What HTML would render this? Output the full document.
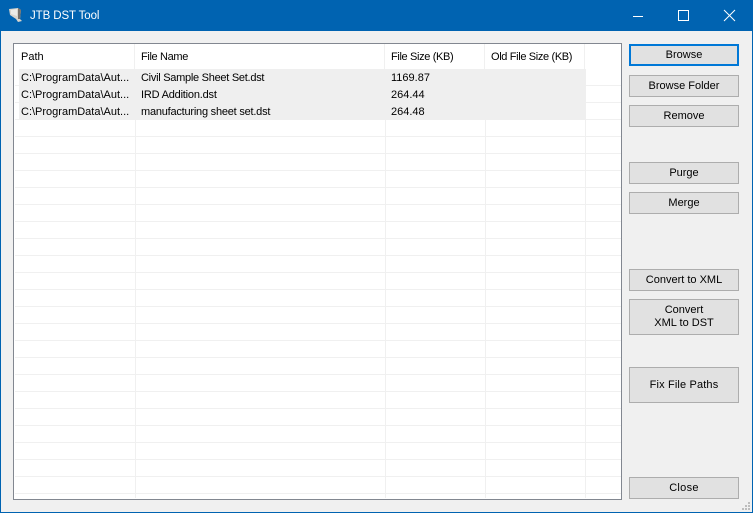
<!DOCTYPE html>
<html><head><meta charset="utf-8"><style>
html,body{margin:0;padding:0;width:753px;height:513px;overflow:hidden;background:#f0f0f0;font-family:"Liberation Sans",sans-serif;font-size:11px;color:#000}
div{position:absolute;box-sizing:border-box}
.t{white-space:nowrap;line-height:14px}
.hd{letter-spacing:-.35px}
.h{background:#efefef}
.g{background:#f0f0f0}
.b{left:629px;width:110px;background:#e1e1e1;border:1px solid #adadad;display:flex;align-items:center;justify-content:center;text-align:center;line-height:13px}
</style></head><body>
<div style="left:0;top:0;width:753px;height:31px;background:#0063b1"></div>
<div style="left:0;top:31px;width:1px;height:482px;background:#0063b1"></div>
<div style="right:0;top:31px;width:1px;height:482px;background:#0063b1"></div>
<div style="left:0;top:512px;width:753px;height:1px;background:#0063b1"></div>
<svg style="position:absolute;left:8px;top:7px" width="16" height="16"><path d="M1 2L10 1L13 3L12 12L14 14L10 15L8 12L2 8Z" fill="#d8d4cc"/><path d="M10 1L13 3L12 12L10 12Z" fill="#77716a"/><path d="M3 3L9 2L9 9L3 7Z" fill="#ecebe6"/></svg>
<div class="t" style="left:30px;top:9px;color:#fff;font-size:11.5px;letter-spacing:-.1px">JTB DST Tool</div>
<svg style="position:absolute;left:630px;top:8px" width="112" height="16" fill="none" stroke="#fff" stroke-width="1"><path d="M3 8.5H13"/><rect x="48.5" y="2.5" width="10" height="10"/><path d="M94 2L105 13M105 2L94 13"/></svg>

<div style="left:13px;top:43px;width:609px;height:457px;background:#fff;border:1px solid #828790"></div>
<!-- grid -->
<div class="g" style="left:15px;top:85px;width:606px;height:1px"></div>
<div class="g" style="left:15px;top:102px;width:606px;height:1px"></div>
<div class="g" style="left:15px;top:119px;width:606px;height:1px"></div>
<div class="g" style="left:15px;top:136px;width:606px;height:1px"></div>
<div class="g" style="left:15px;top:153px;width:606px;height:1px"></div>
<div class="g" style="left:15px;top:170px;width:606px;height:1px"></div>
<div class="g" style="left:15px;top:187px;width:606px;height:1px"></div>
<div class="g" style="left:15px;top:204px;width:606px;height:1px"></div>
<div class="g" style="left:15px;top:221px;width:606px;height:1px"></div>
<div class="g" style="left:15px;top:238px;width:606px;height:1px"></div>
<div class="g" style="left:15px;top:255px;width:606px;height:1px"></div>
<div class="g" style="left:15px;top:272px;width:606px;height:1px"></div>
<div class="g" style="left:15px;top:289px;width:606px;height:1px"></div>
<div class="g" style="left:15px;top:306px;width:606px;height:1px"></div>
<div class="g" style="left:15px;top:323px;width:606px;height:1px"></div>
<div class="g" style="left:15px;top:340px;width:606px;height:1px"></div>
<div class="g" style="left:15px;top:357px;width:606px;height:1px"></div>
<div class="g" style="left:15px;top:374px;width:606px;height:1px"></div>
<div class="g" style="left:15px;top:391px;width:606px;height:1px"></div>
<div class="g" style="left:15px;top:408px;width:606px;height:1px"></div>
<div class="g" style="left:15px;top:425px;width:606px;height:1px"></div>
<div class="g" style="left:15px;top:442px;width:606px;height:1px"></div>
<div class="g" style="left:15px;top:459px;width:606px;height:1px"></div>
<div class="g" style="left:15px;top:476px;width:606px;height:1px"></div>
<div class="g" style="left:15px;top:493px;width:606px;height:1px"></div>
<div class="g" style="left:135px;top:69px;width:1px;height:429px"></div>
<div class="g" style="left:385px;top:69px;width:1px;height:429px"></div>
<div class="g" style="left:485px;top:69px;width:1px;height:429px"></div>
<div class="g" style="left:585px;top:69px;width:1px;height:429px"></div>
<!-- header separators -->
<div class="g" style="left:134px;top:44px;width:1px;height:25px"></div>
<div class="g" style="left:384px;top:44px;width:1px;height:25px"></div>
<div class="g" style="left:484px;top:44px;width:1px;height:25px"></div>
<div class="g" style="left:584px;top:44px;width:1px;height:25px"></div>
<div class="t" style="left:21px;top:50px">Path</div>
<div class="t hd" style="left:141px;top:50px">File Name</div>
<div class="t hd" style="left:391px;top:50px">File Size (KB)</div>
<div class="t hd" style="left:491px;top:50px">Old File Size (KB)</div>
<!-- rows -->
<div class="h" style="left:19px;top:69px;width:567px;height:51px"></div>
<div class="t" style="left:21px;top:71px">C:\ProgramData\Aut...</div>
<div class="t" style="left:141px;top:71px;letter-spacing:-.27px">Civil Sample Sheet Set.dst</div>
<div class="t" style="left:391px;top:71px">1169.87</div>
<div class="t" style="left:21px;top:88px">C:\ProgramData\Aut...</div>
<div class="t" style="left:141px;top:88px;letter-spacing:-.2px">IRD Addition.dst</div>
<div class="t" style="left:391px;top:88px">264.44</div>
<div class="t" style="left:21px;top:105px">C:\ProgramData\Aut...</div>
<div class="t" style="left:141px;top:105px;letter-spacing:-.22px">manufacturing sheet set.dst</div>
<div class="t" style="left:391px;top:105px">264.48</div>
<!-- buttons -->
<div class="b" style="top:44px;height:22px;border:2px solid #0078d7">Browse</div>
<div class="b" style="top:75px;height:22px">Browse Folder</div>
<div class="b" style="top:105px;height:22px">Remove</div>
<div class="b" style="top:162px;height:22px">Purge</div>
<div class="b" style="top:192px;height:22px">Merge</div>
<div class="b" style="top:269px;height:22px">Convert to XML</div>
<div class="b" style="top:299px;height:36px">Convert<br>XML to DST</div>
<div class="b" style="top:367px;height:36px;letter-spacing:.15px">Fix File Paths</div>
<div class="b" style="top:477px;height:22px;letter-spacing:.3px">Close</div>
<!-- grip -->
<svg style="position:absolute;left:740px;top:500px" width="12" height="12" fill="#bdbdbd"><rect x="8" y="2" width="2" height="2"/><rect x="5" y="5" width="2" height="2"/><rect x="8" y="5" width="2" height="2"/><rect x="2" y="8" width="2" height="2"/><rect x="5" y="8" width="2" height="2"/><rect x="8" y="8" width="2" height="2"/></svg>
</body></html>
